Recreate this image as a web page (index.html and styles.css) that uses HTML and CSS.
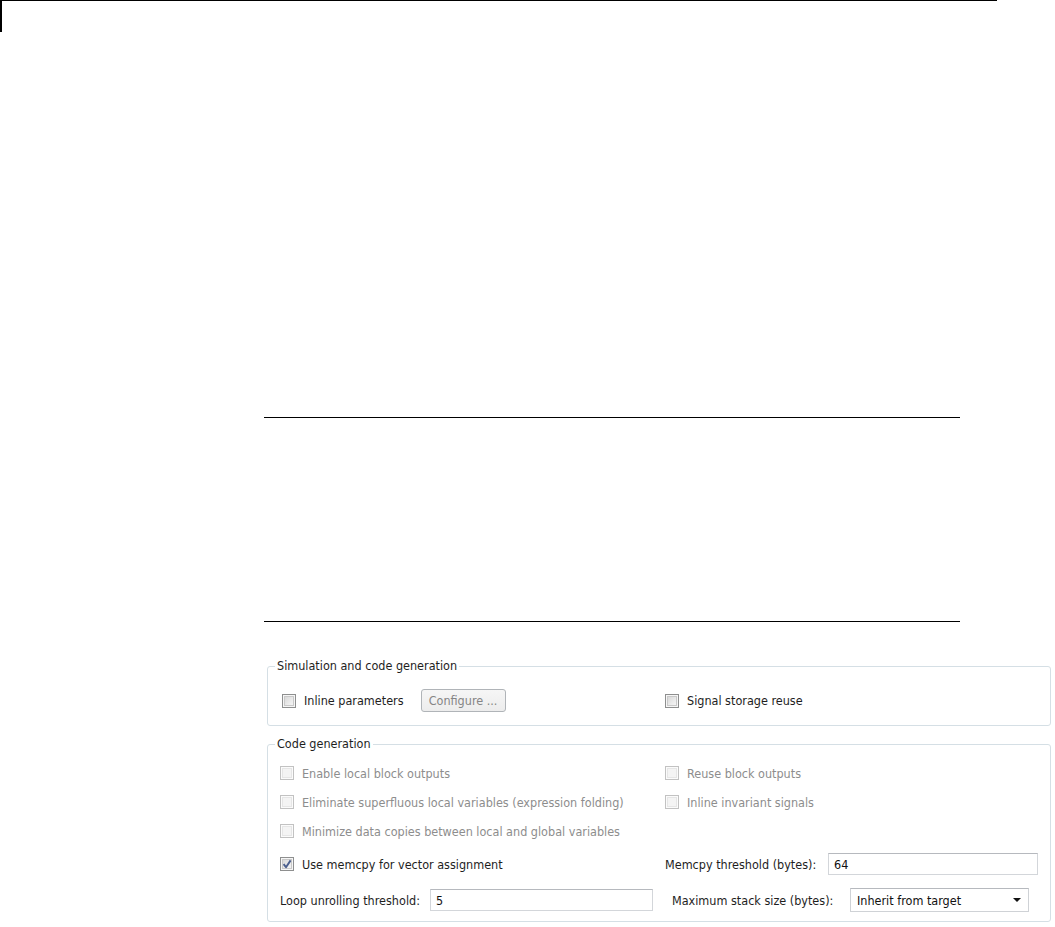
FILE: index.html
```html
<!DOCTYPE html>
<html>
<head>
<meta charset="utf-8">
<link rel="stylesheet" href="styles.css">
</head>
<body>
<div class="frame"></div>
<div class="doc">
  <div class="rule rule-a"></div>
  <div class="rule rule-b"></div>
</div>
<div class="panel">
  <fieldset class="group group-sim">
    <legend>Simulation and code generation</legend>
    <div class="inner">
      <div class="row row-sim">
        <div class="cell cell-first">
          <span class="check"><span class="box"></span><span class="lbl">Inline parameters</span></span>
          <span class="btn">Configure ...</span>
        </div>
        <div class="cell">
          <span class="check"><span class="box"></span><span class="lbl">Signal storage reuse</span></span>
        </div>
      </div>
    </div>
  </fieldset>

  <fieldset class="group group-code">
    <legend>Code generation</legend>
    <div class="inner rows">
      <div class="row">
        <div class="cell"><span class="check off"><span class="box"></span><span class="lbl">Enable local block outputs</span></span></div>
        <div class="cell"><span class="check off"><span class="box"></span><span class="lbl">Reuse block outputs</span></span></div>
      </div>
      <div class="row">
        <div class="cell"><span class="check off"><span class="box"></span><span class="lbl">Eliminate superfluous local variables (expression folding)</span></span></div>
        <div class="cell"><span class="check off"><span class="box"></span><span class="lbl">Inline invariant signals</span></span></div>
      </div>
      <div class="row">
        <div class="cell"><span class="check off"><span class="box"></span><span class="lbl">Minimize data copies between local and global variables</span></span></div>
        <div class="cell"></div>
      </div>
      <div class="row row-field row-memcpy">
        <div class="cell"><span class="check"><span class="box checked"><svg width="14" height="14" viewBox="0 0 14 14"><path d="M3.6 7.2 L6 10.2 L10.6 3.4" fill="none" stroke="#4b5f8e" stroke-width="1.9" stroke-linejoin="round"/></svg></span><span class="lbl">Use memcpy for vector assignment</span></span></div>
        <div class="cell"><span class="lbl">Memcpy threshold (bytes):</span><span class="field field-memcpy">64</span></div>
      </div>
      <div class="row row-field row-loop">
        <div class="cell"><span class="lbl">Loop unrolling threshold:</span><span class="field field-loop">5</span></div>
        <div class="cell cell-stack"><span class="lbl">Maximum stack size (bytes):</span><span class="select"><span>Inherit from target</span><span class="arrow"></span></span></div>
      </div>
    </div>
  </fieldset>
</div>
</body>
</html>
```

FILE: styles.css
```css
body {
  margin: 0;
  background: #ffffff;
  font-family: "DejaVu Sans Condensed", "DejaVu Sans", sans-serif;
  font-stretch: condensed;
  font-size: 12.5px;
  color: #1e1e1e;
}

.frame {
  width: 997px;
  height: 32px;
  box-sizing: border-box;
  border-top: 1px solid #000;
  border-left: 2px solid #000;
}

.doc {
  margin-left: 264px;
  width: 696px;
}

.rule {
  height: 1px;
  background: #000;
}

.rule-a { margin-top: 385px; }
.rule-b { margin-top: 203px; }

.panel {
  margin-left: 267px;
  width: 784px;
  margin-top: 37px;
}

.group {
  margin: 0;
  border: 1px solid #d5dfe5;
  border-radius: 3px;
  padding: 0;
  min-inline-size: 0;
}

.group legend {
  margin-left: 7px;
  padding: 0 2px;
  line-height: 14px;
  color: #1e1e1e;
}

.group-sim .inner {
  padding: 16px 12px 13px;
}

.group-code {
  margin-top: 11px;
}

.group-code .inner {
  padding: 12px 12px 9px;
}

.rows {
  display: flex;
  flex-direction: column;
  gap: 9px;
}

.row {
  display: grid;
  grid-template-columns: 385px 1fr;
  height: 20px;
  align-items: center;
}

.row-sim { height: 23px; }
.row-memcpy { height: 22px; margin-top: 3px; }
.row-loop { height: 24px; margin-top: 4px; }

.cell {
  display: flex;
  align-items: center;
  height: 100%;
}

.cell-first { padding-left: 2px; }

.check {
  display: flex;
  align-items: center;
  gap: 8px;
}

.box {
  width: 14px;
  height: 14px;
  box-sizing: border-box;
  border: 1px solid #8e8f8f;
  background: linear-gradient(135deg, #d2d2d2 0%, #ececec 60%, #fafafa 100%);
  box-shadow: inset 0 0 0 1px #f6f6f6, inset 0 0 0 2px #c9c9c9;
  position: relative;
  flex: none;
}

.box svg {
  position: absolute;
  left: -1px;
  top: -1px;
}

.off .box {
  border-color: #c2c2c2;
  background: #f4f4f4;
  box-shadow: inset 0 0 0 1px #fbfbfb, inset 0 0 0 2px #e6e6e6;
}

.off .lbl {
  color: #8d8d8d;
}

.lbl {
  white-space: nowrap;
  line-height: 15px;
}

.btn {
  margin-left: 17px;
  width: 85px;
  height: 23px;
  box-sizing: border-box;
  border: 1px solid #b0b4b8;
  border-radius: 3px;
  background: linear-gradient(#f6f6f6, #ececec);
  color: #858585;
  display: flex;
  align-items: center;
  justify-content: center;
}

.field {
  height: 22px;
  box-sizing: border-box;
  border: 1px solid #d3d6da;
  border-top-color: #b6b9be;
  background: #fff;
  padding-left: 5px;
  display: flex;
  align-items: center;
  color: #111;
  margin-left: auto;
}

.field-memcpy { width: 210px; }
.field-loop { width: 223px; margin-right: 12px; }

.cell-stack { padding-left: 7px; }

.select {
  margin-left: auto;
  margin-right: 9px;
  width: 179px;
  height: 24px;
  box-sizing: border-box;
  border: 1px solid #cfd2d6;
  border-top-color: #b6b9be;
  background: #fff;
  padding: 0 7px 0 6px;
  display: flex;
  align-items: center;
  justify-content: space-between;
  color: #111;
}

.arrow {
  width: 0;
  height: 0;
  border-left: 4px solid transparent;
  border-right: 4px solid transparent;
  border-top: 4px solid #111;
}
```
